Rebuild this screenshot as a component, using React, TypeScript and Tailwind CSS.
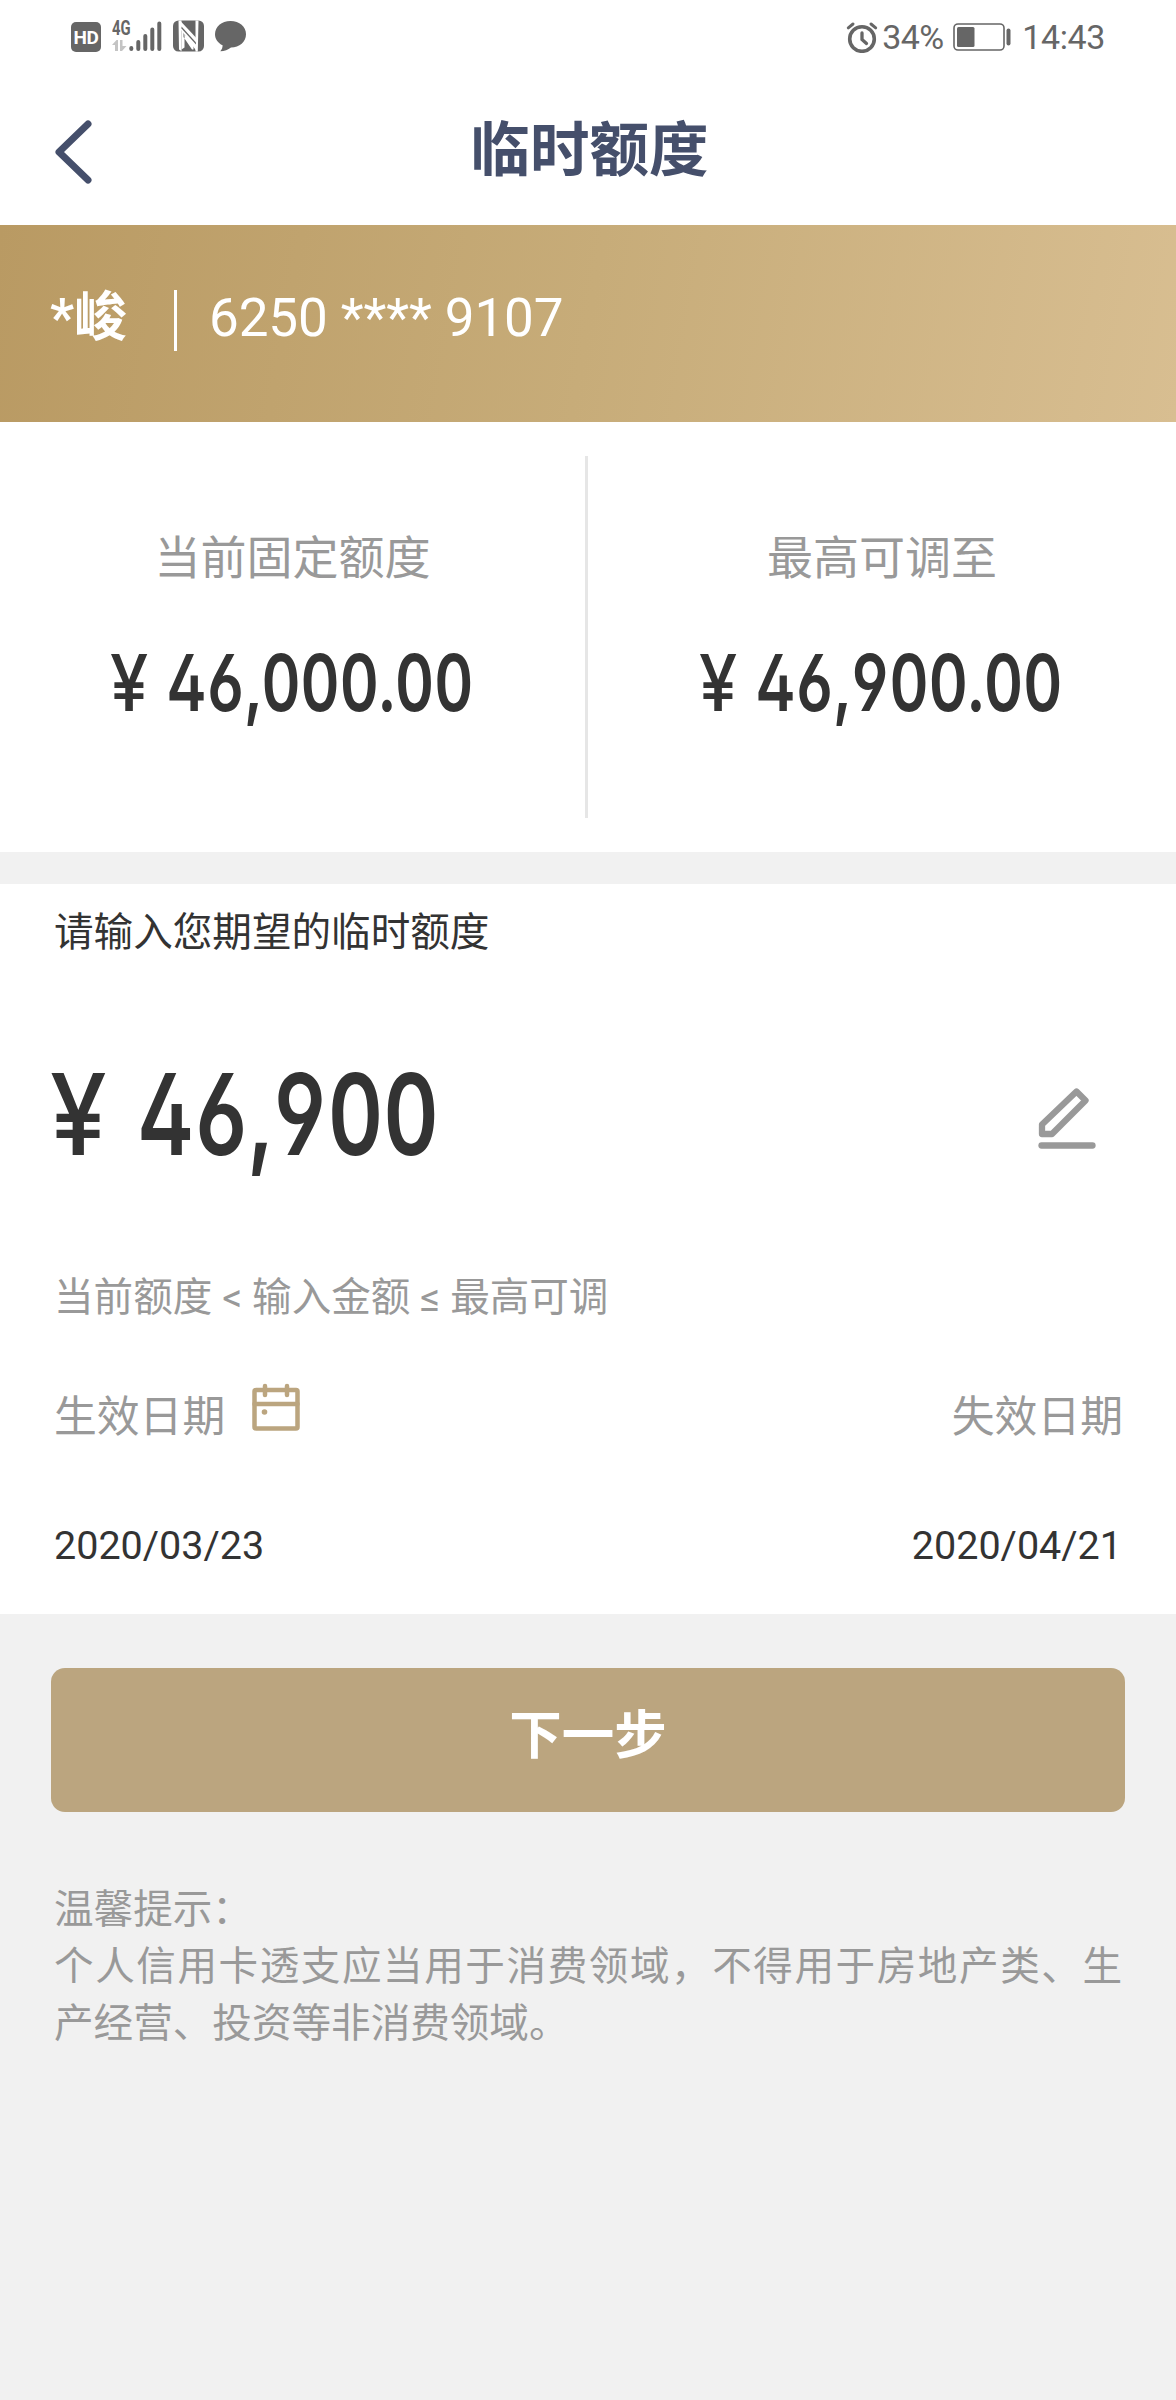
import React from 'react';

const GREY = '#666666';

function SignalIcons() {
  return (
    <div className="flex h-full items-start pl-[71px] pt-5">
      <div className="mt-[2px] flex h-[30px] w-[30px] items-center justify-center rounded-[5px] bg-[#666666] text-[19px] font-bold leading-none tracking-[-0.5px] text-white">
        HD
      </div>
      <div className="ml-[11px] flex w-[17px] flex-col">
        <span className="mt-px inline-block w-6 origin-left scale-x-[0.74] text-[20px] font-bold leading-[14px] text-[#666666]">4G</span>
        <svg className="mt-[5px]" width="15" height="12" viewBox="0 0 15 12" fill="#c4c4c4">
          <path d="M0 5 4.500 0H6V11H3V5ZM8 0H10.500V6H14.500L10 11H8Z" />
        </svg>
      </div>
      <svg className="mt-px" width="34" height="31" viewBox="0 0 34 31" stroke={GREY} strokeWidth="4" strokeLinecap="round">
        <path d="M2.300 27V28M9.300 21V28M16.300 15V28M23.300 8.500V28M30.300 2.500V28" />
      </svg>
      <svg className="ml-[10px]" width="31" height="32" viewBox="0 0 31 32">
        <rect x="0" y="0.500" width="31" height="31" rx="5.500" fill={GREY} />
        <path d="M5.500 0.500H8.500V31.500H9L6 29.500ZM22.500 0.500H25.500L24.800 31.500H22.500Z" fill="#fff" />
        <path d="M7 0.500 23.800 18.500V31.500L7 8.500Z" fill="#fff" />
        <path d="M8.500 8.500V29.500L11.500 27.500V14.500L20.500 25V29.500L19 29.500 10.500 17V10Z" fill="#fff" />
        <path d="M8.500 6.500 23 22.500V24.500L8.500 8.500Z" fill={GREY} />
      </svg>
      <svg className="ml-[11px] mt-px" width="32" height="31" viewBox="0 0 32 31" fill={GREY}>
        <path d="M15.500 0C24.500 0 31 5.500 31 13.200C31 21 24.500 26.400 16 26.400C13 28.800 9.500 30.200 5.300 30.300C7 28.500 7.600 26.500 7.600 24.300C3 22 0 18 0 13.200C0 5.500 6.500 0 15.500 0Z" />
      </svg>
    </div>
  );
}

function StatusBar() {
  return (
    <div className="flex h-[72px] justify-between text-[#666666]">
      <SignalIcons />
      <div className="flex h-[74px] items-center pr-[71px] text-[34px] leading-none">
        <svg width="32" height="32" viewBox="0 0 32 32" fill="none" stroke={GREY} strokeLinecap="round">
          <circle cx="16" cy="18" r="12.300" strokeWidth="3.600" />
          <path d="M16 12V18.500L20.500 22.500" strokeWidth="3.300" />
          <path d="M2.300 6.800 7 3M29.700 6.800 25 3" strokeWidth="3" />
        </svg>
        <span className="ml-[4px] w-[62px] whitespace-nowrap tracking-[-0.6px]">34%</span>
        <svg className="ml-[9px]" width="58" height="28" viewBox="0 0 58 28">
          <rect x="1" y="1" width="50" height="26" rx="4" fill="none" stroke={GREY} strokeWidth="1.600" />
          <rect x="4" y="4" width="17.500" height="20" rx="1.500" fill={GREY} />
          <rect x="53.500" y="5.500" width="4" height="17" rx="2" fill={GREY} />
        </svg>
        <span className="ml-[11px] tracking-[-0.400px]">14:43</span>
      </div>
    </div>
  );
}

function Header() {
  return (
    <header className="relative flex h-[153px] items-center justify-center">
      <svg className="absolute left-[50px] top-[44px]" width="46" height="72" viewBox="0 0 46 72" fill="none" stroke="#454f6b" strokeWidth="7" strokeLinecap="round" strokeLinejoin="round">
        <path d="M38 8 9 36 38 64" />
      </svg>
      <h1 className="pl-[3px] pt-[6px] text-[59.500px] font-bold leading-[147px] text-[#454f6b]">临时额度</h1>
    </header>
  );
}

function Money({ className, text }: { className: string; text: string }) {
  return (
    <span
      className={`inline-block shrink-0 origin-left whitespace-nowrap leading-none tabular-nums [font-family:Inter,sans-serif] [font-feature-settings:'tnum','cv02','cv03','cv04'] ${className}`}
    >
      {text}
    </span>
  );
}

function Limit({ label, value }: { label: string; value: string }) {
  return (
    <div className="flex flex-col items-center">
      <div className="mt-[74px] text-[46px] leading-[56px] text-[#999999]">{label}</div>
      <div className="mt-[58px] flex h-[78px] w-[366px] text-[#333333]">
        <Money className="w-[57px] scale-x-[0.88] text-[78px] font-medium" text="¥" />
        <Money className="scale-x-[0.775] text-[78px] font-semibold" text={value} />
      </div>
    </div>
  );
}

export default function App() {
  return (
    <div className="min-h-[2400px] w-[1176px] overflow-hidden bg-[#f1f1f1] [font-family:Roboto,'Noto_Sans_CJK_SC',sans-serif]">
      <div className="bg-white">
        <StatusBar />
        <Header />
      </div>

      <section className="flex h-[197px] items-start bg-[linear-gradient(100deg,#b99a63_0%,#c7ac79_50%,#d8be91_100%)] pl-[50px] pt-[65px] text-white">
        <div className="w-[124px] text-[53px] font-bold leading-[56px]">*峻</div>
        <div className="h-[61px] w-[3px] bg-white" />
        <div className="ml-[32px] text-[53px] leading-[56px] tracking-[-0.100px]">6250 **** 9107</div>
      </section>

      <section className="flex h-[430px] items-center bg-white">
        <div className="flex h-[362px] w-[585px] justify-center">
          <Limit label="当前固定额度" value="46,000.00" />
        </div>
        <div className="h-[362px] w-[3px] bg-[#e6e6e6]" />
        <div className="flex h-[362px] flex-1 justify-center">
          <Limit label="最高可调至" value="46,900.00" />
        </div>
      </section>

      <section className="mt-8 h-[730px] bg-white px-[54px]">
        <div className="pt-[21px] text-[39.600px] leading-[56px] text-[#333333]">请输入您期望的临时额度</div>
        <div className="mt-[97px] flex h-[113px] items-start justify-between text-[#333333]">
          <div className="-ml-[4px] flex">
            <Money className="w-[88px] scale-x-[0.9] text-[113px] font-medium" text="¥" />
            <Money className="scale-x-[0.76] text-[113px] font-semibold" text="46,900" />
          </div>
          <svg className="mr-[25px] mt-[29px]" width="62" height="64" viewBox="0 0 62 64" fill="none" stroke="#999999" strokeWidth="6.300" strokeLinejoin="round" strokeLinecap="round">
            <path d="M41.500 4.500 50.500 13.500 17 47H7V37.500Z" />
            <path d="M6.500 58.500H57.500" />
          </svg>
        </div>
        <div className="mt-[99px] text-[39.600px] leading-[56px] text-[#999999]">当前额度 &lt; 输入金额 ≤ 最高可调</div>
        <div className="-mr-[1px] mt-[63px] flex h-[56px] justify-between text-[42.800px] leading-[56px] text-[#999999]">
          <div className="flex">
            生效日期
            <svg className="ml-[27px] mt-[-6px]" width="48" height="48" viewBox="0 0 48 48" fill="none" stroke="#bba57f" strokeWidth="4.500" strokeLinecap="round">
              <rect x="2.500" y="7" width="43" height="38.500" rx="1.500" />
              <path d="M2.500 21H45.500M13 3V12M35 3V12" />
              <circle cx="12.500" cy="29" r="2.800" fill="#bba57f" stroke="none" />
            </svg>
          </div>
          <span>失效日期</span>
        </div>
        <div className="mt-[73px] flex justify-between text-[39.500px] leading-[56px] text-[#333333]">
          <span>2020/03/23</span>
          <span>2020/04/21</span>
        </div>
      </section>

      <div className="px-[51px] pt-[54px]">
        <button className="block h-[144px] w-full rounded-[14px] bg-[#bba57f] pb-[7px] text-[52.500px] font-bold leading-[137px] text-white">下一步</button>
      </div>
      <div className="mt-[69px] px-[54px] text-justify text-[39.600px] leading-[57px] text-[#999999]">
        <p>温馨提示：</p>
        <p>个人信用卡透支应当用于消费领域，不得用于房地产类、生产经营、投资等非消费领域。</p>
      </div>
    </div>
  );
}
